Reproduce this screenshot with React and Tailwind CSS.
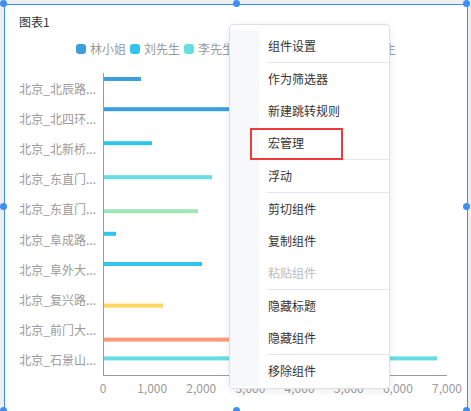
const series = [
  { name: "林小姐", color: "#3a9fdb" },
  { name: "刘先生", color: "#32c5eb" },
  { name: "李先生", color: "#65dde2" },
  { name: "王先生", color: "#9fe7b6" },
  { name: "张先生", color: "#fdd65e" },
  { name: "赵先生", color: "#fb9a7a" },
];

// [label, series index, bar end x]
const rows = [
  ["北京_北辰路...", 0, 141],
  ["北京_北四环...", 0, 300],
  ["北京_北新桥...", 1, 152],
  ["北京_东直门...", 2, 212],
  ["北京_东直门...", 3, 198],
  ["北京_阜成路...", 1, 116],
  ["北京_阜外大...", 1, 202],
  ["北京_复兴路...", 4, 163],
  ["北京_前门大...", 5, 330],
  ["北京_石景山...", 2, 437],
];

const ticks = ["0", "1,000", "2,000", "3,000", "4,000", "5,000", "6,000", "7,000"];

const menu = [
  { label: "组件设置", sep: true },
  { label: "作为筛选器" },
  { label: "新建跳转规则" },
  { label: "宏管理", sep: true },
  { label: "浮动", sep: true },
  { label: "剪切组件" },
  { label: "复制组件" },
  { label: "粘贴组件", disabled: true, sep: true },
  { label: "隐藏标题" },
  { label: "隐藏组件", sep: true },
  { label: "移除组件" },
];

const font = { fontFamily: '"Noto Sans CJK SC", "Noto Sans", sans-serif' };

function Chart() {
  const top = 73;
  const band = 30.2;
  return (
    <svg width="462" height="351" viewBox="5 60 462 351" className="block">
      {rows.map(([label, s, end], i) => {
        const y0 = top + band * i;
        const off = 4 + s * 3.8;
        return (
          <g key={i}>
            <text
              x="96"
              y={y0 + band / 2}
              textAnchor="end"
              dominantBaseline="central"
              fontSize="12"
              fill="#9a9a9a"
              style={font}
            >
              {label}
            </text>
            <rect x="103" y={y0 + off} width={end - 103} height="4" fill={series[s].color} />
          </g>
        );
      })}
      <line x1="103.5" y1="73" x2="103.5" y2="375.5" stroke="#9a9a9a" strokeWidth="1" />
      <line x1="103" y1="375.5" x2="447" y2="375.5" stroke="#9a9a9a" strokeWidth="1" />
      {ticks.map((t, i) => (
        <text
          key={t}
          x={103 + i * 49.15}
          y="387"
          textAnchor="middle"
          dominantBaseline="central"
          fontSize="12"
          fill="#9a9a9a"
          style={font}
        >
          {t}
        </text>
      ))}
    </svg>
  );
}

function Handle({ className }) {
  return <div className={`absolute w-[7px] h-[7px] rounded-full bg-[#3d8ef6] ${className}`} />;
}

export default function App() {
  return (
    <div className="w-[471px] h-[411px] overflow-hidden bg-[#eceef1] pt-1 pl-1" style={font}>
      <div className="relative w-[464px] h-[408px] bg-white border border-[#3d8ef6]">
        <div className="h-[26px] pt-[9px] pl-[14px] text-[12px] leading-[16px] text-[#333]">图表1</div>
        <div className="h-[29px] pt-[10px] flex justify-center gap-[4px]">
          {series.map((s) => (
            <div key={s.name} className="flex items-center h-[16px]">
              <span className="w-[10px] h-[10px] rounded-[3px]" style={{ background: s.color }} />
              <span className="ml-[4px] text-[12px] leading-[16px] text-[#999]">{s.name}</span>
            </div>
          ))}
        </div>
        <Chart />

        <Handle className="left-[-5px] top-[-5px]" />
        <Handle className="left-[228px] top-[-5px]" />
        <Handle className="left-[458px] top-[-5px]" />
        <Handle className="left-[-5px] top-[198px]" />
        <Handle className="left-[458px] top-[198px]" />
        <Handle className="left-[-5px] top-[402px]" />
        <Handle className="left-[228px] top-[402px]" />
        <Handle className="left-[458px] top-[402px]" />

        <div className="absolute left-[224px] top-[19px] w-[161px] h-[365px] bg-white border border-[#dcdfe6] rounded-[4px] shadow-[0_2px_8px_rgba(0,0,0,0.08)]">
          <div className="absolute left-0 top-[5px] bottom-[2px] w-[29px] bg-[#f7f8fa]" />
          <div className="relative pt-[5px] pl-[37px]">
            {menu.map((m) => (
              <div key={m.label}>
                <div
                  className={`h-[32px] pl-[1px] flex items-center text-[12px] ${
                    m.disabled ? "text-[#bbb]" : "text-[#333]"
                  }`}
                >
                  {m.label}
                </div>
                {m.sep && <div className="h-px bg-[#e4e7ed]" />}
              </div>
            ))}
          </div>
          <div className="absolute left-[20px] top-[103px] w-[93px] h-[32px] border-2 border-[#ee3a3a]" />
        </div>
      </div>
    </div>
  );
}
